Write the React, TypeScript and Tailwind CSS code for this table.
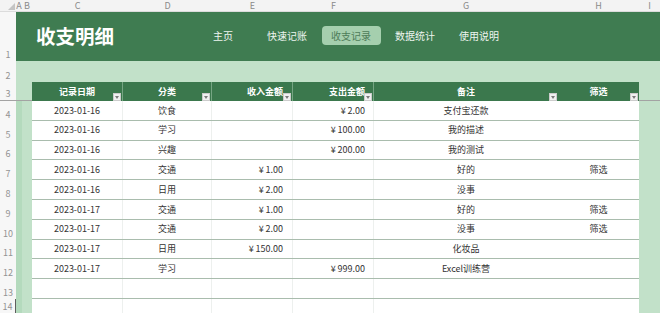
import React from "react";

type Entry = {
  date: string;
  cat: string;
  income: string;
  expense: string;
  note: string;
  filter: string;
};

const entries: Entry[] = [
  { date: "2023-01-16", cat: "饮食", income: "", expense: "¥\u20092.00", note: "支付宝还款", filter: "" },
  { date: "2023-01-16", cat: "学习", income: "", expense: "¥\u2009100.00", note: "我的描述", filter: "" },
  { date: "2023-01-16", cat: "兴趣", income: "", expense: "¥\u2009200.00", note: "我的测试", filter: "" },
  { date: "2023-01-16", cat: "交通", income: "¥\u20091.00", expense: "", note: "好的", filter: "筛选" },
  { date: "2023-01-16", cat: "日用", income: "¥\u20092.00", expense: "", note: "没事", filter: "" },
  { date: "2023-01-17", cat: "交通", income: "¥\u20091.00", expense: "", note: "好的", filter: "筛选" },
  { date: "2023-01-17", cat: "交通", income: "¥\u20092.00", expense: "", note: "没事", filter: "筛选" },
  { date: "2023-01-17", cat: "日用", income: "¥\u2009150.00", expense: "", note: "化妆品", filter: "" },
  { date: "2023-01-17", cat: "学习", income: "", expense: "¥\u2009999.00", note: "Excel训练营", filter: "" },
  { date: "", cat: "", income: "", expense: "", note: "", filter: "" },
  { date: "", cat: "", income: "", expense: "", note: "", filter: "" },
];

const letters = [
  { l: "A", w: "w-[6px]" },
  { l: "B", w: "w-[10px]" },
  { l: "C", w: "w-[91px]" },
  { l: "D", w: "w-[89px]" },
  { l: "E", w: "w-[81px]" },
  { l: "F", w: "w-[81px]" },
  { l: "G", w: "w-[184px]" },
  { l: "H", w: "w-[81px]" },
  { l: "I", w: "w-[21px]" },
];

const navItems = ["主页", "快速记账", "收支记录", "数据统计", "使用说明"];

const RowNum = ({ n, className = "" }: { n: number; className?: string }) => (
  <div
    className={`w-[16px] shrink-0 flex items-end justify-center pb-[2px] text-[9px] leading-none text-[#939393] bg-[#f7f7f7] ${className}`}
  >
    {n}
  </div>
);

const Drop = () => (
  <div className="absolute right-[1px] bottom-0 w-[8px] h-[8px] bg-[#f0f0f0] border border-[#cccccc] flex items-center justify-center">
    <svg width="4" height="3" viewBox="0 0 4 3">
      <path d="M0 0h4L2 3z" fill="#7a7a7a" />
    </svg>
  </div>
);

const HeadCell = ({ label, className }: { label: string; className: string }) => (
  <div className={`relative h-full flex items-center text-[9px] font-bold text-white ${className}`}>
    {label}
    <Drop />
  </div>
);

export default function App() {
  return (
    <div className="w-[660px] h-[313px] overflow-hidden bg-white font-['Noto_Sans_CJK_SC','Noto_Sans',sans-serif]">
      {/* column letters */}
      <div className="flex h-[12px] bg-[#f3f3f3] border-b border-[#dcdcdc]">
        <div className="w-[16px] shrink-0 flex items-end justify-end pr-[1px] pb-[1px]">
          <svg width="7" height="7" viewBox="0 0 7 7">
            <path d="M7 0v7H0z" fill="#c4c4c4" />
          </svg>
        </div>
        {letters.map((c) => (
          <div
            key={c.l}
            className={`${c.w} shrink-0 flex items-center justify-center text-[9px] leading-none text-[#8a8a8a]`}
          >
            {c.l}
          </div>
        ))}
      </div>

      {/* row 1: banner */}
      <div className="flex h-[49px]">
        <RowNum n={1} />
        <div className="flex-1 flex items-center bg-[#3f7c51] pl-[20px] pb-[1px]">
          <div className="text-[19.5px] font-bold text-white leading-none">收支明细</div>
          <div className="flex items-center ml-[77px] pb-[2px]">
            {navItems.map((item) => (
              <div key={item} className="w-[64px] flex justify-center">
                {item === "收支记录" ? (
                  <div className="w-[59px] h-[19px] rounded-[4px] bg-[#a5cfae] text-[#4d7c59] text-[10px] flex items-center justify-center">
                    {item}
                  </div>
                ) : (
                  <div className="text-[10px] text-[#eef5f0]">{item}</div>
                )}
              </div>
            ))}
          </div>
        </div>
      </div>

      {/* row 2 */}
      <div className="flex h-[21px]">
        <RowNum n={2} />
        <div className="flex-1 bg-[#c2e1c9]" />
      </div>

      {/* row 3: table header */}
      <div className="flex h-[19px]">
        <RowNum n={3} className="border-b border-[#a3a3a3]" />
        <div className="w-[16px] shrink-0 bg-[#c2e1c9] border-b border-[#a3a3a3]" />
        <div className="flex bg-[#3b784d]">
          <HeadCell label="记录日期" className="w-[91px] justify-center border-r border-[#76a583]" />
          <HeadCell label="分类" className="w-[89px] justify-center border-r border-[#76a583]" />
          <HeadCell label="收入金额" className="w-[81px] justify-end pr-[9px] border-r border-[#76a583]" />
          <HeadCell label="支出金额" className="w-[81px] justify-end pr-[8px] border-r border-[#76a583]" />
          <HeadCell label="备注" className="w-[184px] justify-center" />
          <HeadCell label="筛选" className="w-[81px] justify-center" />
        </div>
        <div className="w-[21px] shrink-0 bg-[#c2e1c9] border-b border-[#a3a3a3]" />
      </div>

      {/* data rows */}
      {entries.map((e, i) => {
        const last = i === entries.length - 1;
        return (
          <div key={i} className="flex h-[19.8px]">
            <RowNum
              n={i + 4}
              className={last ? "bg-[#dedede] border-r border-[#5f5f5f] items-start pt-[3px]" : ""}
            />
            <div className="flex shrink-0">
              <div className="w-[6px] bg-[#b4dabd]" />
              <div className="w-[10px] bg-[#c2e1c9]" />
            </div>
            <div className="flex bg-white border-b border-[#a9bcad] text-[9px] text-[#333333]">
              <div className="w-[91px] flex items-center justify-center border-r border-[#edf0ee]">{e.date}</div>
              <div className="w-[89px] flex items-center justify-center border-r border-[#edf0ee]">{e.cat}</div>
              <div className="w-[81px] flex items-center justify-end pr-[9px] border-r border-[#edf0ee]">{e.income}</div>
              <div className="w-[81px] flex items-center justify-end pr-[8px] border-r border-[#edf0ee]">{e.expense}</div>
              <div className="w-[184px] flex items-center justify-center">{e.note}</div>
              <div className="w-[81px] flex items-center justify-center">{e.filter}</div>
            </div>
            <div className="w-[21px] shrink-0 bg-[#c2e1c9]" />
          </div>
        );
      })}
    </div>
  );
}
